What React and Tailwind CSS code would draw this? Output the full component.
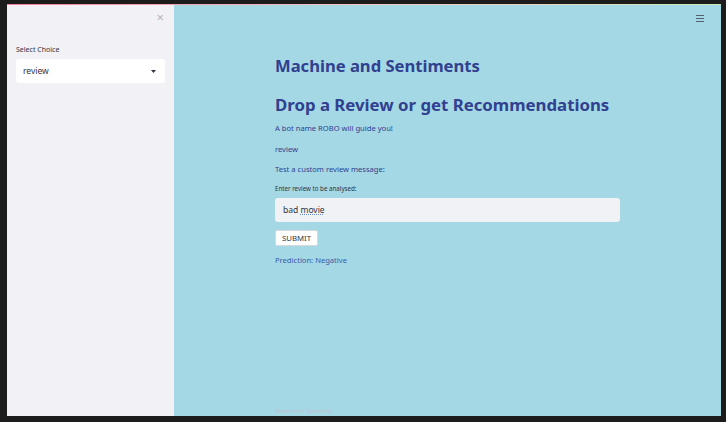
import { useState } from "react";

const font = { fontFamily: '"Noto Sans", "Open Sans", Arial, sans-serif' };

const App = () => {
    const [review, setReview] = useState("bad movie");

    return (
    <div className="w-[726px] h-[422px] bg-[#1c1c1c] pl-[7px] pt-[4px] pr-[5px] pb-[6px] overflow-hidden" style={font}>
        <div className="flex flex-col w-full h-full">
        {/* top decoration line */}
        <div className="h-[1px] w-full bg-gradient-to-r from-[#f07fa0] via-[#f4c6c6] to-[#c9e8b5]" />
        <div className="flex flex-1 min-h-0">
            {/* sidebar */}
            <aside className="w-[167px] bg-[#f1f1f6] flex flex-col px-[9px]">
            <div className="flex justify-end pt-[6px] pr-[1px]">
                <span className="text-[#b4b6bd] text-[13px] leading-[13px]">×</span>
            </div>
            <label className="mt-[21px] text-[7px] leading-[10px] text-[#31333f]">Select Choice</label>
            <div className="mt-[4px] h-[24px] bg-white rounded-[3px] flex items-center justify-between pl-[7px] pr-[9px]">
                <span className="text-[8.5px] text-[#31333f]">review</span>
                <svg width="5" height="3" viewBox="0 0 5 3"><path d="M0 0h5L2.5 3z" fill="#31333f" /></svg>
            </div>
            </aside>

            {/* main */}
            <main className="flex-1 bg-[#a4d8e5] relative flex flex-col">
            <div className="absolute right-[17px] top-[10px]">
                <svg width="8" height="7" viewBox="0 0 8 7"><path d="M0 0.5h8M0 3.5h8M0 6.5h8" stroke="#55606e" strokeWidth="1" /></svg>
            </div>
            <div className="w-[345px] mx-auto flex flex-col flex-1 text-[#31408f]">
                <h1 className="mt-[49px] text-[16.6px] leading-[24px] font-bold">Machine and Sentiments</h1>
                <h2 className="mt-[15px] text-[16.8px] leading-[24px] font-bold whitespace-nowrap">Drop a Review or get Recommendations</h2>
                <p className="mt-[5px] text-[7.6px] leading-[12px]">A bot name ROBO will guide you!</p>
                <p className="mt-[9px] text-[7.6px] leading-[12px]">review</p>
                <p className="mt-[8px] text-[7.6px] leading-[12px]">Test a custom review message:</p>
                <label className="mt-[9px] text-[6.2px] leading-[10px] text-[#31333f]">Enter review to be analysed:</label>
                <div className="mt-[4px] h-[24px] bg-[#f0f2f6] rounded-[3px] flex items-center px-[8px]">
                <span className="text-[8.5px] text-[#31333f]">bad <span className="underline decoration-dotted decoration-[#6b8bd6]">movie</span></span>
                </div>
                <div className="mt-[8px] flex">
                <button onClick={() => setReview(review)} className="h-[16px] w-[43px] bg-white border border-[#d6d9de] rounded-[2px] text-[7.8px] leading-[14px] text-[#31333f]">SUBMIT</button>
                </div>
                <p className="mt-[8px] text-[7.6px] leading-[12px] text-[#3d5aa6]">Prediction: Negative</p>
                <div className="flex-1" />
                <p className="mb-[1px] text-[5.6px] font-bold text-[#b8c8d6]">Made with Streamlit</p>
            </div>
            </main>
        </div>
        </div>
    </div>
    );
};

export default App;
